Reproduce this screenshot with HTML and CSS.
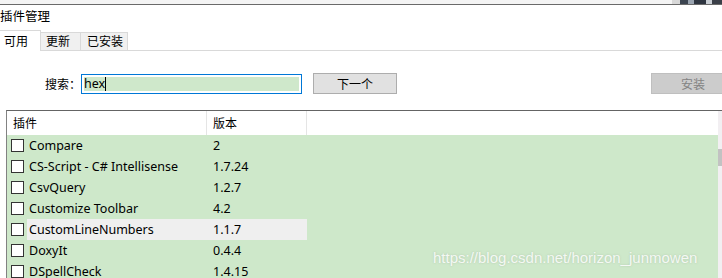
FILE: index.html
```html
<!DOCTYPE html>
<html lang="zh">
<head>
<meta charset="utf-8">
<title>插件管理</title>
<link rel="stylesheet" href="styles.css">
</head>
<body>
<div class="topbar"><div class="topbar-img"></div></div>
<div class="title">插件管理</div>
<div class="tabs">
  <div class="tab active">可用</div>
  <div class="tab">更新</div>
  <div class="tab">已安装</div>
</div>
<div class="search-row">
  <label class="search-label">搜索：</label>
  <div class="search-input"><span class="search-text">hex</span><span class="caret"></span></div>
  <button class="btn next">下一个</button>
  <div class="spacer"></div>
  <button class="btn install" disabled>安装</button>
</div>
<div class="list">
  <div class="list-body">
    <div class="list-head">
      <div class="hcell">插件</div>
      <div class="hcell sep">版本</div>
      <div class="hcell sep"></div>
    </div>
    <div class="row"><span class="cb"></span><span class="name">Compare</span><span class="ver">2</span></div>
    <div class="row"><span class="cb"></span><span class="name">CS-Script - C# Intellisense</span><span class="ver">1.7.24</span></div>
    <div class="row"><span class="cb"></span><span class="name">CsvQuery</span><span class="ver">1.2.7</span></div>
    <div class="row"><span class="cb"></span><span class="name">Customize Toolbar</span><span class="ver">4.2</span></div>
    <div class="row hover"><span class="cb"></span><span class="name">CustomLineNumbers</span><span class="ver">1.1.7</span></div>
    <div class="row"><span class="cb"></span><span class="name">DoxyIt</span><span class="ver">0.4.4</span></div>
    <div class="row"><span class="cb"></span><span class="name">DSpellCheck</span><span class="ver">1.4.15</span></div>
    <div class="watermark">https://blog.csdn.net/horizon_junmowen</div>
  </div>
  <div class="scrollbar"><div class="thumb"></div></div>
</div>
</body>
</html>
```
FILE: styles.css
```css
html, body {
  margin: 0;
  padding: 0;
  background: #ffffff;
  overflow: hidden;
}
body {
  width: 722px;
  height: 278px;
  display: flex;
  flex-direction: column;
  font-family: "Noto Sans", "Noto Sans CJK SC", sans-serif;
  font-size: 12px;
  color: #000;
}
.topbar {
  flex: 0 0 4px;
  background: #f4f4f4;
  border-bottom: 1px solid #6a6a6a;
  display: flex;
  justify-content: flex-end;
}
.topbar-img {
  width: 50px;
  height: 4px;
  background: linear-gradient(90deg, #d8d8d8 0 8px, #3b4450 8px 16px, #9aa4b0 16px 22px, #2e3540 22px 34px, #c9ced4 34px 40px, #3a3f48 40px);
}
.title {
  flex: 0 0 25px;
  line-height: 22px;
  font-family: "Noto Sans CJK SC", sans-serif;
  font-size: 12.5px;
}
.tabs {
  flex: 0 0 20px;
  display: flex;
  align-items: flex-end;
  border-bottom: 1px solid #d9d9d9;
}
.tab {
  box-sizing: border-box;
  height: 18px;
  line-height: 16px;
  border: 1px solid #d9d9d9;
  border-bottom: none;
  border-left: none;
  background: #f0f0f0;
  font-family: "Noto Sans CJK SC", sans-serif;
  padding: 0 0 0 5px;
}
.tab:nth-child(2) { width: 40px; }
.tab:nth-child(3) { width: 47px; padding-left: 6px; }
.tab.active {
  width: 41px;
  height: 21px;
  line-height: 20px;
  background: #fff;
  margin-bottom: -1px;
  padding-left: 4px;
}
.search-row {
  flex: 0 0 21px;
  display: flex;
  align-items: center;
  margin-top: 22px;
}
.search-label {
  flex: 0 0 79px;
  min-width: 0;
  box-sizing: border-box;
  padding-left: 45px;
  white-space: nowrap;
  overflow: visible;
  font-family: "Noto Sans CJK SC", sans-serif;
  line-height: 21px;
}
.search-input {
  margin-left: 2px;
  box-sizing: border-box;
  flex: 0 0 221px;
  height: 20px;
  border: 1px solid #0078d7;
  padding: 2px;
  display: flex;
  align-items: stretch;
}
.search-text {
  background: #cfe8cb;
  flex: 0 0 auto;
  display: flex;
  align-items: center;
  font-size: 12.5px;
  line-height: 14px;
}
.caret {
  width: 1px;
  background: #000;
}
.search-input::after {
  content: "";
  flex: 1;
  background: #cfe8cb;
}
.btn {
  box-sizing: border-box;
  height: 21px;
  font-family: "Noto Sans CJK SC", sans-serif;
  font-size: 12px;
  padding: 0;
}
.next {
  margin-left: 11px;
  flex: 0 0 84px;
  background: #e1e1e1;
  border: 1px solid #adadad;
  color: #000;
}
.spacer { flex: 1; }
.install {
  flex: 0 0 71px;
  background: #cccccc;
  border: 1px solid #bfbfbf;
  border-right: none;
  color: #838383;
  text-align: left;
  padding-left: 29px;
}
.list {
  flex: 1;
  min-height: 0;
  overflow: hidden;
  margin-top: 16px;
  margin-left: 6px;
  border-top: 1px solid #646464;
  border-left: 1px solid #828282;
  display: flex;
}
.list-body {
  flex: 1;
  position: relative;
}
.list-head {
  display: grid;
  grid-template-columns: 199px 100px 1fr;
  height: 24px;
  background: #fff;
}
.hcell {
  padding-left: 6px;
  line-height: 24px;
  font-family: "Noto Sans CJK SC", sans-serif;
}
.hcell.sep {
  border-left: 1px solid #e5e5e5;
}
.row {
  display: grid;
  grid-template-columns: 20px 180px 100px 1fr;
  height: 21px;
  background: #cee8ca;
  align-items: center;
  font-size: 12.5px;
}
.cb {
  box-sizing: border-box;
  width: 13px;
  height: 13px;
  border: 1px solid #333;
  background: #fff;
  margin-left: 4px;
}
.name {
  padding-left: 2px;
  line-height: 21px;
  white-space: nowrap;
}
.ver {
  padding-left: 6px;
  line-height: 21px;
}
.row.hover .name,
.row.hover .ver {
  background: #efefef;
}
.watermark {
  position: absolute;
  left: 426px;
  top: 138px;
  font-family: "Liberation Sans", sans-serif;
  font-size: 15px;
  color: rgba(255,255,255,0.85);
  text-shadow: 0 0 2px rgba(120,140,120,0.35);
}
.scrollbar {
  width: 4px;
  background: #f2eff2;
}
.thumb {
  margin-top: 38px;
  height: 17px;
  background: #c2c2c2;
}
```
